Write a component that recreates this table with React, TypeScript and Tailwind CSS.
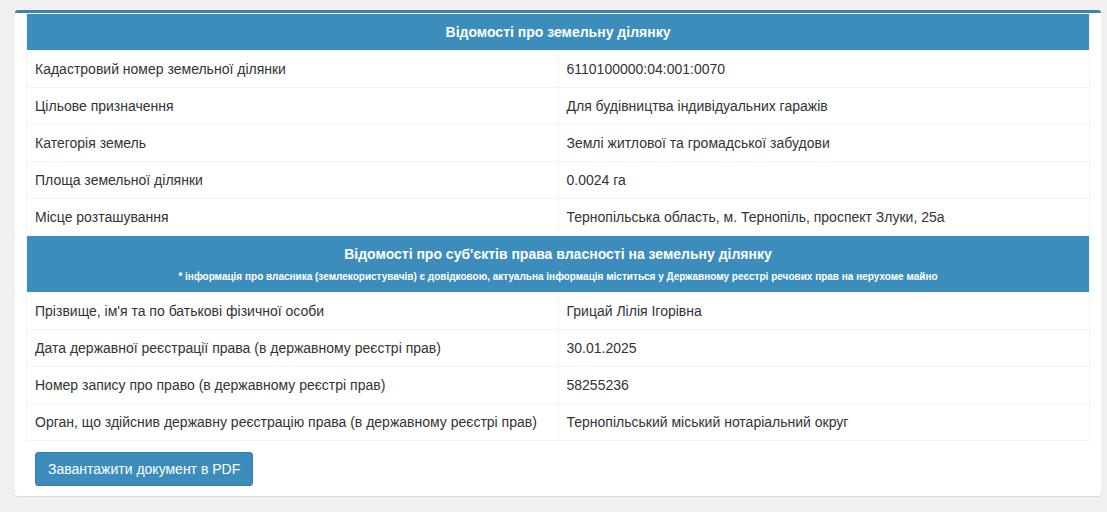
import React from 'react'

const PARCEL = [
  ['Кадастровий номер земельної ділянки', '6110100000:04:001:0070'],
  ['Цільове призначення', 'Для будівництва індивідуальних гаражів'],
  ['Категорія земель', 'Землі житлової та громадської забудови'],
  ['Площа земельної ділянки', '0.0024 га'],
  ['Місце розташування', 'Тернопільська область, м. Тернопіль, проспект Злуки, 25а']
]

const OWNER = [
  ['Прізвище, ім\'я та по батькові фізичної особи', 'Грицай Лілія Ігорівна'],
  ['Дата державної реєстрації права (в державному реєстрі прав)', '30.01.2025'],
  ['Номер запису про право (в державному реєстрі прав)', '58255236'],
  ['Орган, що здійснив державну реєстрацію права (в державному реєстрі прав)', 'Тернопільський міський нотаріальний округ']
]

const Row: React.FC<{ label: string; value: string }> = ({ label, value }) => (
  <tr>
    <td className="h-[37px] w-1/2 border border-[#f4f4f4] px-2 py-0 align-middle leading-5">
      {label}
    </td>
    <td className="h-[37px] w-1/2 border border-[#f4f4f4] px-2 py-0 align-middle leading-5">
      {value}
    </td>
  </tr>
)

export default function App() {
  return (
    <div
      className="min-h-[512px] bg-[#f0f0f0] px-[15px] pt-[10px] text-[14px] text-[#333]"
      style={{ fontFamily: '"Liberation Sans", Arial, sans-serif' }}
    >
      <div className="w-[1086px] rounded-[3px] border-t-[3px] border-[#3f82ab] bg-white px-[11px] pb-[10px] shadow-[0_1px_1px_rgba(0,0,0,0.1)]">
        <table className="w-full table-fixed border-collapse border border-[#f4f4f4]">
          <tbody>
            {/* Parcel section */}
            <tr>
              <th
                colSpan={2}
                className="h-[37px] bg-[#3c8dbc] px-2 text-center font-bold leading-5 text-white"
              >
                Відомості про земельну ділянку
              </th>
            </tr>
            {PARCEL.map(([l, v]) => (
              <Row key={l} label={l} value={v} />
            ))}

            {/* Owner section */}
            <tr>
              <th
                colSpan={2}
                className="h-[56px] bg-[#3c8dbc] px-2 pt-[8px] pb-[5px] text-center font-bold text-white"
              >
                <div className="leading-5">
                  Відомості про суб'єктів права власності на земельну ділянку
                </div>
                <div className="mt-[3px] text-[10px] leading-5">
                  * інформація про власника (землекористувачів) є довідковою, актуальна інформація міститься у Державному реєстрі речових прав на нерухоме майно
                </div>
              </th>
            </tr>
            {OWNER.map(([l, v]) => (
              <Row key={l} label={l} value={v} />
            ))}
          </tbody>
        </table>

        <button className="mt-[11px] ml-[9px] h-[34px] rounded-[3px] border border-[#367fa9] bg-[#3c8dbc] px-3 text-[14px] text-white">
          Завантажити документ в PDF
        </button>
      </div>
    </div>
  )
}
